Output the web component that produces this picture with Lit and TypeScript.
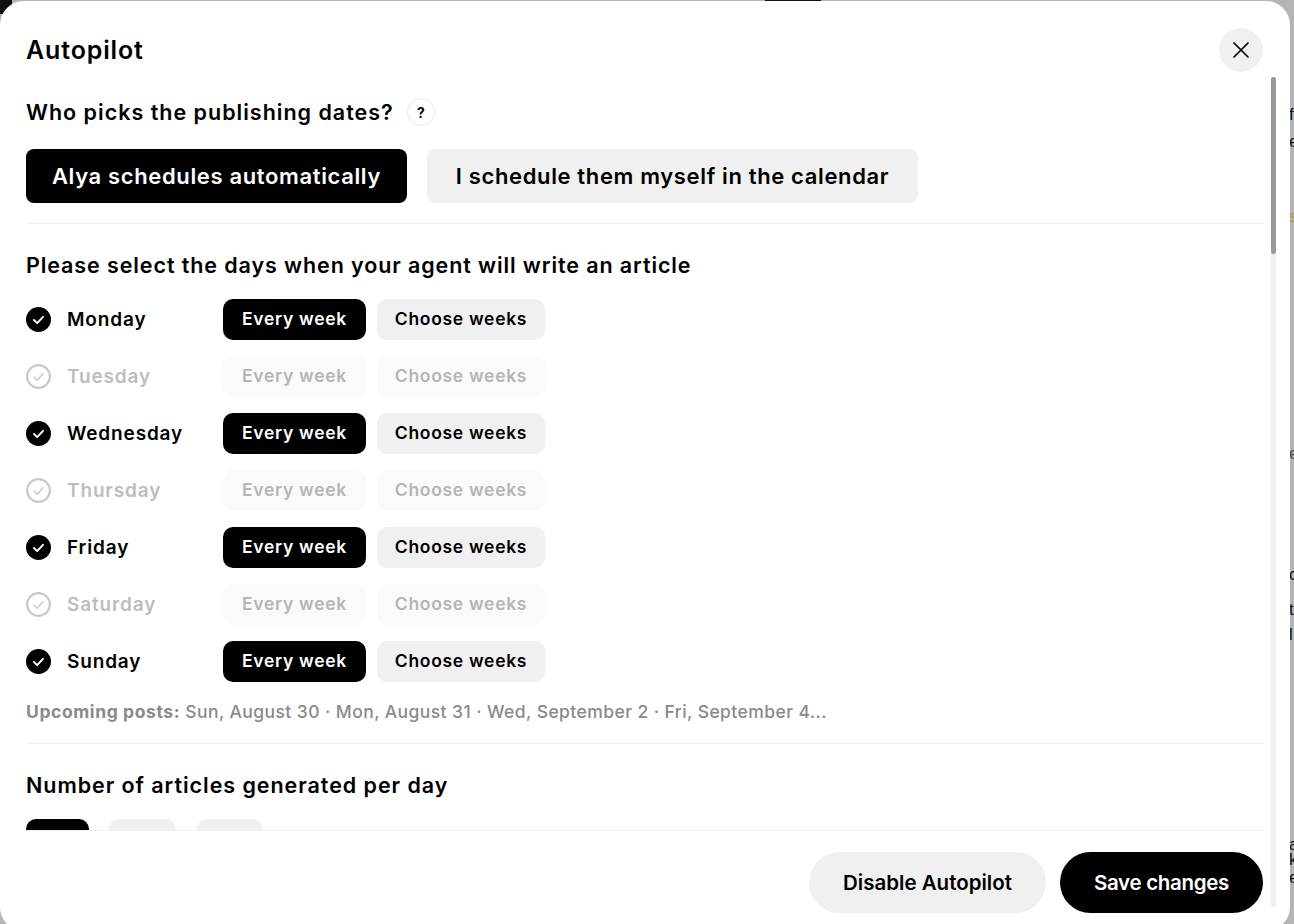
import { LitElement, html, css, svg } from "lit";
import { customElement } from "lit/decorators.js";

const DAYS: [string, boolean][] = [
  ["Monday", true], ["Tuesday", false], ["Wednesday", true], ["Thursday", false],
  ["Friday", true], ["Saturday", false], ["Sunday", true],
];

const check = (on: boolean) => html`<svg class="chk" viewBox="0 0 25 25" width="25" height="25">
  ${on
    ? svg`<circle cx="12.5" cy="12.5" r="12.5" fill="#000"/><path d="M8 13l3.2 3.2L17 9.8" fill="none" stroke="#fff" stroke-width="1.9" stroke-linecap="round" stroke-linejoin="round"/>`
    : svg`<circle cx="12.5" cy="12.5" r="11.4" fill="none" stroke="#c9c9c9" stroke-width="2.2"/><path d="M8 13l3.2 3.2L17 9.8" fill="none" stroke="#c9c9c9" stroke-width="1.5" stroke-linecap="round" stroke-linejoin="round"/>`}
</svg>`;

@customElement("app-root")
export class AppRoot extends LitElement {
  static styles = css`
    :host { display: block; position: relative; width: 1294px; height: 924px; overflow: hidden; background: #b4b4b4; font-family: Inter, "Noto Sans", sans-serif; color: #000; }
    * { box-sizing: border-box; }
    .sliver { position: absolute; color: #111; font-size: 17px; line-height: 20px; left: 1289px; font-family: "Liberation Sans", sans-serif; }
    .gold { color: #b8923c; }
    .dim { color: #444; }
    .topbar { position: absolute; left: 765px; top: 0; width: 56px; height: 2px; background: #111; }
    .corner { position: absolute; left: 0; top: 0; width: 12px; height: 14px; background: #111; }
    .modal { position: absolute; left: 0; top: 1px; width: 1290px; height: 930px; background: #fff; border-radius: 24px; display: flex; flex-direction: column; overflow: hidden; }
    header { display: flex; justify-content: space-between; align-items: center; padding: 27px 27px 5px 26px; height: 76px; flex: none; }
    h1 { margin: 0; font-size: 25px; font-weight: 600; letter-spacing: .85px; line-height: 44px; }
    .close { width: 44px; height: 44px; border-radius: 50%; background: #f0f0f0; border: 0; padding: 0; display: flex; align-items: center; justify-content: center; }
    .scroll { height: 753px; flex: none; overflow: hidden; padding: 0 26px; position: relative; }
    h2 { margin: 0; font-size: 21.5px; font-weight: 600; line-height: 28px; letter-spacing: .9px; }
    .who { display: flex; align-items: center; gap: 13px; margin-top: 21px; }
    .who h2 { letter-spacing: 1px; }
    .help { width: 28px; height: 28px; border-radius: 50%; border: 1px solid #e6e6e6; display: flex; align-items: center; justify-content: center; font-size: 14px; font-weight: 700; letter-spacing: 0; }
    .mode { display: flex; gap: 20px; margin-top: 23px; }
    .mode button { height: 54px; border-radius: 8px; font-size: 22px; letter-spacing: .64px; }
    button { font-family: inherit; font-weight: 600; border: 0; padding: 0; background: #f0f0f0; color: #000; }
    button.on { background: #000; color: #fff; }
    .m1 { width: 381px; }
    .m2 { width: 491px; }
    .rule { height: 1px; background: #f0f0f0; margin: 20px 0 0 1px; width: 1237px; }
    .sec { margin-top: 27px; }
    .num { letter-spacing: .95px; }
    .days { display: flex; flex-direction: column; gap: 16px; margin-top: 20px; }
    .day { display: flex; align-items: center; height: 41px; }
    .day .chk { flex: none; margin-right: 16px; }
    .name { width: 156px; font-size: 19px; font-weight: 600; letter-spacing: .85px; }
    .off .name { color: #bdbdbd; }
    .day button { height: 41px; border-radius: 10px; font-size: 17.5px; letter-spacing: .7px; padding-bottom: 2px; }
    .ev { width: 143px; margin-right: 11px; }
    .ch { width: 168px; }
    .off button { background: #fafafa; color: #b5b5b5; }
    .up { margin: 18px 0 0; font-size: 17.5px; line-height: 24px; color: #8a8a8a; font-weight: 500; white-space: nowrap; letter-spacing: .42px; }
    .up b { font-weight: 700; letter-spacing: .6px; }
    .rule2 { margin-top: 19px; }
    .counts { display: flex; margin-top: 20px; }
    .counts button { height: 44px; border-radius: 10px; }
    .c1 { width: 63px; margin-right: 20px; }
    .c2 { width: 67px; margin-right: 21px; }
    .c3 { width: 66px; }
    footer { flex: none; margin: 0 27px 0 26px; border-top: 1px solid #f0f0f0; padding-top: 21px; display: flex; justify-content: flex-end; gap: 14px; }
    footer button { height: 61px; border-radius: 31px; font-size: 20.5px; }
    .dis { width: 237px; }
    .save { width: 203px; letter-spacing: -.3px; }
    .track { position: absolute; left: 1271px; top: 77px; width: 5px; height: 830px; background: #f0f0f0; border-radius: 3px; }
    .thumb { width: 5px; height: 177px; background: #999; border-radius: 3px; }
  `;

  render() {
    return html`
      <div class="corner"></div>
      <div class="topbar"></div>
      <div class="sliver" style="top:105px">f</div>
      <div class="sliver" style="top:132px">e</div>
      <div class="sliver gold" style="top:207px">s</div>
      <div class="sliver dim" style="top:444px">e</div>
      <div class="sliver" style="top:565px">c</div>
      <div class="sliver" style="top:600px">t</div>
      <div class="sliver" style="top:625px">l</div>
      <div class="sliver" style="top:835px">a</div>
      <div class="sliver" style="top:850px">k</div>
      <div class="sliver" style="top:868px">e</div>
      <section class="modal">
        <header>
          <h1>Autopilot</h1>
          <button class="close" aria-label="Close">
            <svg viewBox="0 0 16 16" width="16" height="16"><path d="M1 1l14 14M15 1L1 15" stroke="#000" stroke-width="1.7" stroke-linecap="round" fill="none"/></svg>
          </button>
        </header>
        <div class="scroll">
          <div class="who"><h2>Who picks the publishing dates?</h2><span class="help">?</span></div>
          <div class="mode">
            <button class="on m1">Alya schedules automatically</button>
            <button class="m2">I schedule them myself in the calendar</button>
          </div>
          <div class="rule"></div>
          <h2 class="sec">Please select the days when your agent will write an article</h2>
          <div class="days">
            ${DAYS.map(([d, on]) => html`<div class="day ${on ? "" : "off"}">
              ${check(on)}<span class="name">${d}</span>
              <button class="ev ${on ? "on" : ""}">Every week</button>
              <button class="ch">Choose weeks</button>
            </div>`)}
          </div>
          <p class="up"><b>Upcoming posts:</b> Sun, August 30 · Mon, August 31 · Wed, September 2 · Fri, September 4...</p>
          <div class="rule rule2"></div>
          <h2 class="sec num">Number of articles generated per day</h2>
          <div class="counts">
            <button class="on c1"></button><button class="c2"></button><button class="c3"></button>
          </div>
        </div>
        <footer>
          <button class="dis">Disable Autopilot</button>
          <button class="on save">Save changes</button>
        </footer>
      </section>
      <div class="track"><div class="thumb"></div></div>
    `;
  }
}
